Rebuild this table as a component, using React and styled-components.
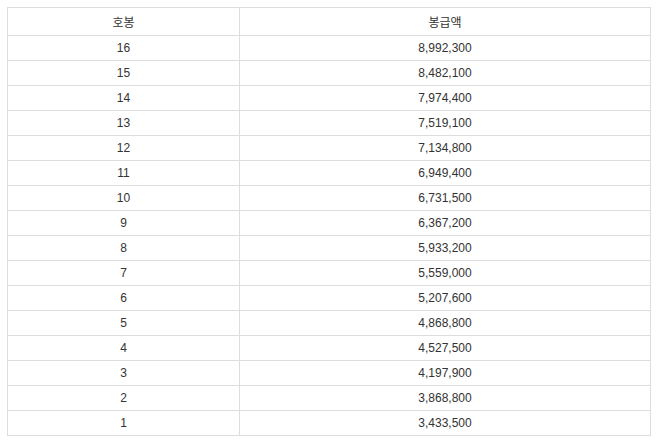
import React from 'react';
import styled, { createGlobalStyle } from 'styled-components';

const GlobalStyle = createGlobalStyle`
  html, body {
    margin: 0;
    padding: 0;
    background: #fff;
  }
  body {
    font-family: "Liberation Sans", Arial, "Noto Sans CJK KR", sans-serif;
    font-size: 12px;
    color: #333;
  }
`;

const Wrap = styled.div`
  padding: 7px 6px 7px 7px;
`;

const PayTable = styled.table`
  width: 644px;
  border-collapse: collapse;
  table-layout: fixed;
`;

const HeadCell = styled.th`
  height: 27px;
  padding: 0;
  border: 1px solid #ddd;
  font-weight: normal;
  text-align: center;
  vertical-align: middle;
  width: ${({ w }) => w || 'auto'};
`;

const Cell = styled.td`
  height: 24px;
  padding: 0;
  border: 1px solid #ddd;
  text-align: center;
  vertical-align: middle;
`;

const rows = [
  [16, '8,992,300'],
  [15, '8,482,100'],
  [14, '7,974,400'],
  [13, '7,519,100'],
  [12, '7,134,800'],
  [11, '6,949,400'],
  [10, '6,731,500'],
  [9, '6,367,200'],
  [8, '5,933,200'],
  [7, '5,559,000'],
  [6, '5,207,600'],
  [5, '4,868,800'],
  [4, '4,527,500'],
  [3, '4,197,900'],
  [2, '3,868,800'],
  [1, '3,433,500'],
];

export default function App() {
  return (
    <>
      <GlobalStyle />
      <Wrap>
        <PayTable>
          <thead>
            <tr>
              <HeadCell w="231px">호봉</HeadCell>
              <HeadCell>봉급액</HeadCell>
            </tr>
          </thead>
          <tbody>
            {rows.map(([step, pay]) => (
              <tr key={step}>
                <Cell>{step}</Cell>
                <Cell>{pay}</Cell>
              </tr>
            ))}
          </tbody>
        </PayTable>
      </Wrap>
    </>
  );
}
